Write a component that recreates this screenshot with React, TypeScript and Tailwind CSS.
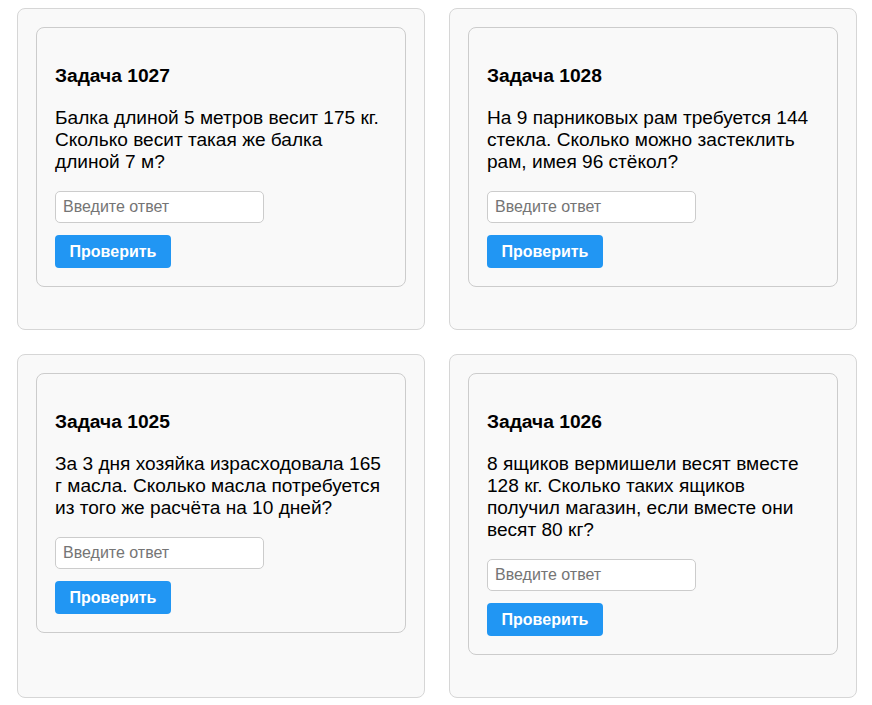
const tasks = [
  { id: 1027, text: 'Балка длиной 5 метров весит 175 кг. Сколько весит такая же балка длиной 7 м?' },
  { id: 1028, text: 'На 9 парниковых рам требуется 144 стекла. Сколько можно застеклить рам, имея 96 стёкол?' },
  { id: 1025, text: 'За 3 дня хозяйка израсходовала 165 г масла. Сколько масла потребуется из того же расчёта на 10 дней?' },
  { id: 1026, text: '8 ящиков вермишели весят вместе 128 кг. Сколько таких ящиков получил магазин, если вместе они весят 80 кг?' },
];

function TaskCard({ id, text }: { id: number; text: string }) {
  return (
    <div className="bg-[#f9f9f9] border border-[#d6d6d6] rounded-lg pt-[18px] pb-[42px] pl-[18px] pr-[18px]">
      <div className="border border-[#cccccc] rounded-lg px-[18px] pt-[18px] pb-[18px]">
        <h3 className="mt-[19px] text-[19.2px] font-bold leading-[21px] text-black">Задача {id}</h3>
        <p className="mt-[21px] text-[19.1px] leading-[22px] text-black">{text}</p>
        <input
          type="text"
          placeholder="Введите ответ"
          className="mt-[18px] block w-[209px] h-[32px] px-[7px] border border-[#cccccc] rounded-[5px] bg-white text-[16px] placeholder:text-[#757575] outline-none"
        />
        <button className="mt-[12px] block w-[116px] h-[33px] bg-[#2196f3] text-white text-[16px] font-bold rounded-[4px] leading-[31px]">
          Проверить
        </button>
      </div>
    </div>
  );
}

export default function App() {
  return (
    <div className="grid grid-cols-2 gap-6 pl-[17px] pr-[15px] pt-2 pb-4 bg-white font-['Liberation_Sans',Arial,sans-serif]">
      {tasks.map(t => (
        <TaskCard key={t.id} id={t.id} text={t.text} />
      ))}
    </div>
  );
}
